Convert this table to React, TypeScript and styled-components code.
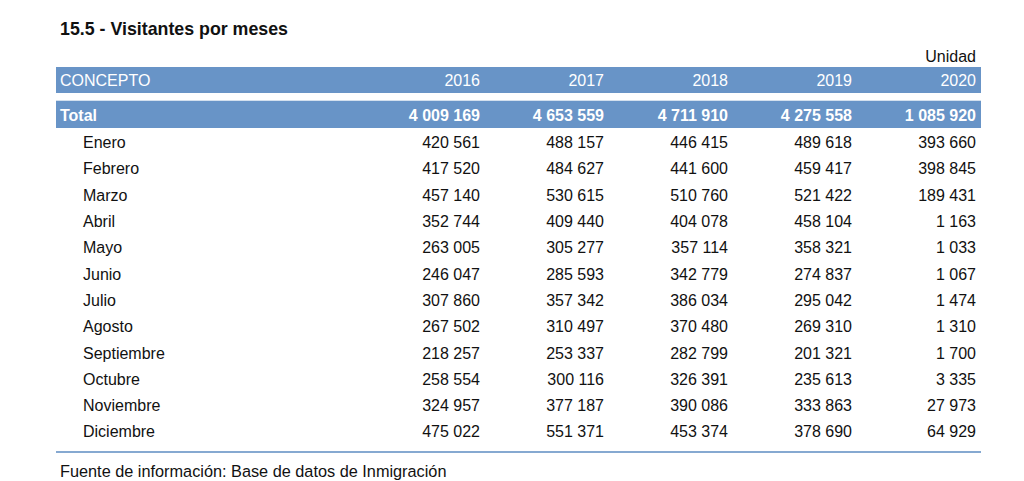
import styled, { createGlobalStyle } from "styled-components";

const GlobalStyle = createGlobalStyle`
  html, body {
    margin: 0;
    padding: 0;
    background: #ffffff;
  }
  body {
    font-family: "Liberation Sans", Arial, sans-serif;
    color: #111;
  }
`;

const Page = styled.div`
  width: 925px;
  padding: 18px 0 0 56px;
`;

const Title = styled.h1`
  margin: 0;
  padding-left: 4px;
  font-size: 17.8px;
  font-weight: 700;
  line-height: 22px;
`;

const Unit = styled.div`
  margin-top: 7px;
  padding-right: 5px;
  text-align: right;
  font-size: 16px;
  line-height: 19px;
`;

const Row = styled.div<{ $variant?: "head" | "total" | "body" }>`
  display: grid;
  grid-template-columns: 305px repeat(5, 124px);
  align-items: center;
  box-sizing: border-box;
  padding-top: 2px;
  font-size: 16px;
  height: ${(p) =>
    p.$variant === "head" ? "26px" : p.$variant === "total" ? "28px" : "26.3px"};
  background: ${(p) => (p.$variant && p.$variant !== "body" ? "#6894c7" : "transparent")};
  color: ${(p) => (p.$variant && p.$variant !== "body" ? "#ffffff" : "#111")};
  font-weight: ${(p) => (p.$variant === "total" ? 700 : 400)};
  margin-top: ${(p) => (p.$variant === "head" ? "1px" : p.$variant === "total" ? "7px" : "0")};
  border-top: ${(p) => (p.$variant === "total" ? "1px solid #d3e0ee" : "none")};
`;

const Label = styled.div<{ $indent?: boolean }>`
  padding-left: ${(p) => (p.$indent ? "27px" : "4px")};
`;

const Num = styled.div`
  text-align: right;
  padding-right: 5px;
`;

const Body = styled.div`
  padding-top: 1px;
`;

const Rule = styled.div`
  margin-top: 6px;
  height: 2px;
  background: #86a9d1;
`;

const Source = styled.div`
  margin-top: 8px;
  padding-left: 4px;
  font-size: 16.3px;
  line-height: 20px;
`;

const years = ["2016", "2017", "2018", "2019", "2020"];

const total = ["4 009 169", "4 653 559", "4 711 910", "4 275 558", "1 085 920"];

const months: [string, string[]][] = [
  ["Enero", ["420 561", "488 157", "446 415", "489 618", "393 660"]],
  ["Febrero", ["417 520", "484 627", "441 600", "459 417", "398 845"]],
  ["Marzo", ["457 140", "530 615", "510 760", "521 422", "189 431"]],
  ["Abril", ["352 744", "409 440", "404 078", "458 104", "1 163"]],
  ["Mayo", ["263 005", "305 277", "357 114", "358 321", "1 033"]],
  ["Junio", ["246 047", "285 593", "342 779", "274 837", "1 067"]],
  ["Julio", ["307 860", "357 342", "386 034", "295 042", "1 474"]],
  ["Agosto", ["267 502", "310 497", "370 480", "269 310", "1 310"]],
  ["Septiembre", ["218 257", "253 337", "282 799", "201 321", "1 700"]],
  ["Octubre", ["258 554", "300 116", "326 391", "235 613", "3 335"]],
  ["Noviembre", ["324 957", "377 187", "390 086", "333 863", "27 973"]],
  ["Diciembre", ["475 022", "551 371", "453 374", "378 690", "64 929"]],
];

export default function App() {
  return (
    <>
      <GlobalStyle />
      <Page>
        <Title>15.5 - Visitantes por meses</Title>
        <Unit>Unidad</Unit>
        <Row $variant="head">
          <Label>CONCEPTO</Label>
          {years.map((y) => (
            <Num key={y}>{y}</Num>
          ))}
        </Row>
        <Row $variant="total">
          <Label>Total</Label>
          {total.map((v, i) => (
            <Num key={i}>{v}</Num>
          ))}
        </Row>
        <Body>
          {months.map(([name, vals]) => (
            <Row key={name} $variant="body">
              <Label $indent>{name}</Label>
              {vals.map((v, i) => (
                <Num key={i}>{v}</Num>
              ))}
            </Row>
          ))}
        </Body>
        <Rule />
        <Source>Fuente de información: Base de datos de Inmigración</Source>
      </Page>
    </>
  );
}
